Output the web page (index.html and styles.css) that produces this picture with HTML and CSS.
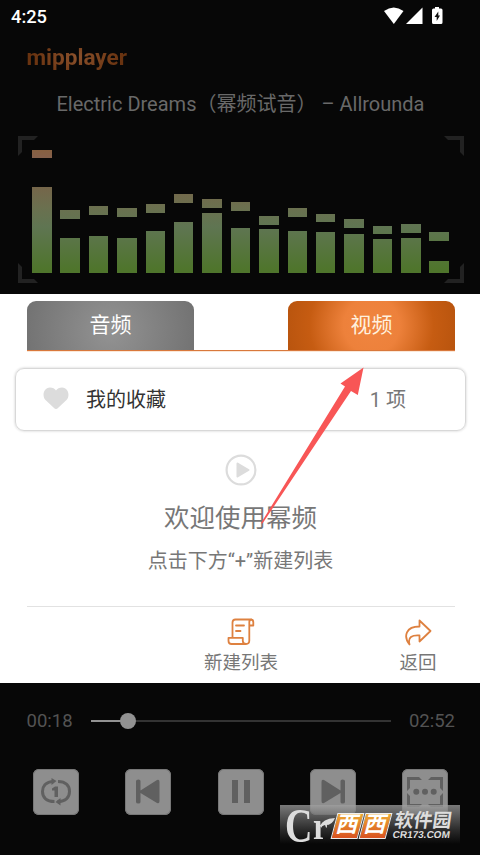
FILE: index.html
```html
<!DOCTYPE html>
<html lang="zh-CN">
<head>
<meta charset="utf-8">
<title>mipplayer</title>
<link rel="stylesheet" href="styles.css">
</head>
<body>
<div class="app">
  <header class="top">
    <div class="status">
      <span>4:25</span>
      <svg class="status-icons" width="60" height="20" viewBox="0 0 60 20">
        <path d="M0 4Q9.8-3.2 19.500 4L9.800 17Z"/>
        <path d="M38.500.500V17H22Z"/>
        <path d="M49.500 1.500H51V0H55V1.500H57Q58.500 1.500 58.500 3V15.500Q58.500 17 57 17H49.500Q48 17 48 15.500V3Q48 1.500 49.500 1.500Z"/>
        <path class="bolt" d="M54.300 4.500L50.500 10H52.700V14L56 8.500H54.300Z"/>
      </svg>
    </div>
    <h1 class="brand">mipplayer</h1>
    <p class="track">Electric Dreams（幂频试音） – Allrounda</p>
    <div class="visual">
      <svg class="corners" width="446" height="147" viewBox="0 0 446 147">
        <path d="M0 0H20L16 4H4V16L0 20ZM446 0H426L430 4H442V16L446 20ZM0 147H20L16 143H4V131L0 127ZM446 147H426L430 143H442V131L446 127Z"/>
      </svg>
      <div class="bars" id="bars"></div>
    </div>
  </header>
  <main class="panel">
    <nav class="tabs">
      <div class="tab audio">音频</div>
      <div class="tab video">视频</div>
    </nav>
    <div class="card">
      <svg width="26" height="23" viewBox="0 0 26 23"><path d="M13 22Q12 22 10.500 20.500L2.500 13C-1 9.500 0 1 7 .500Q11 .500 13 3.500Q15 .500 19 .500C26 1 27 9.500 23.500 13L15.500 20.500Q14 22 13 22Z" fill="#dcdcdc"/></svg>
      <span class="name">我的收藏</span>
      <span class="count">1 项</span>
    </div>
    <div class="welcome">
      <svg width="32" height="32" viewBox="0 0 32 32"><circle cx="16" cy="16" r="14.400" fill="none" stroke="#dcdcdc" stroke-width="2.200"/><path d="M12.500 9.500L23.500 16L12.500 22.500Z" fill="#dcdcdc" stroke="#dcdcdc" stroke-width="2" stroke-linejoin="round"/></svg>
      <h2>欢迎使用幂频</h2>
      <p>点击下方“+”新建列表</p>
    </div>
    <div class="actions">
      <div class="action create">
        <svg width="28" height="28" viewBox="0 0 28 28"><path d="M5.500 19.500V4.500Q5.500 1.500 8.500 1.500H23.500Q26.300 1.500 26.300 4V7.500H22.300V4Q22.300 1.500 24.500 1.500M22.300 7.500V22.500Q22.300 26 19 26H4.500Q1.500 26 1.500 23V19.800H15.800V23Q16 26 19 26M9 7.500H17M9 13H13.500"/></svg>
        <span>新建列表</span>
      </div>
      <div class="action back">
        <svg width="28" height="28" viewBox="0 0 28 28"><path d="M15.500 2.500L26.500 13L15.500 23.500V17.500C8 17 3.500 19 5.500 26.500C-1 18 2 8.500 15.500 8.500Z"/></svg>
        <span>返回</span>
      </div>
    </div>
    <svg class="arrow" width="105" height="158" viewBox="0 0 105 158"><path d="M103.500.500L97.800 28L91 24L2.500 156.500L1 156L85 19.500L80.500 16.500Z"/></svg>
  </main>
  <footer class="player">
    <div class="progress">
      <span>00:18</span>
      <div class="line"><i class="played"></i><i class="knob"></i></div>
      <span>02:52</span>
    </div>
    <div class="controls">
      <div class="btn"><svg viewBox="0 0 46 46"><g fill="none" stroke="#606060" stroke-width="3"><path d="M21 12.500C12 12.500 9.500 18 9.500 22.500C9.500 28 13 32.500 21.500 32.500"/><path d="M25 12.500C33 12.500 36.500 17 36.500 22.500C36.500 28 33 32.500 24.500 32.500"/></g><path d="M18.500 9L23.500 12L18.500 16ZM27.500 29L22.500 33L27.500 36.500ZM22 17.500H25V28H21.500V21.500H19V19.500Z" fill="#606060"/></svg></div>
      <div class="btn"><svg viewBox="0 0 46 46"><path d="M11 12Q11 10.500 13.500 10.500Q15.500 10.500 15.500 12V21.500L32 11Q34.500 10 34.500 13V32Q34.500 35 32 34L15.500 24V33Q15.500 34.500 13.500 34.500Q11 34.500 11 33Z"/></svg></div>
      <div class="btn"><svg viewBox="0 0 46 46"><path d="M14 11H20V34H14ZM26 11H32V34H26Z"/></svg></div>
      <div class="btn"><svg viewBox="0 0 46 46"><path d="M35 12Q35 10.500 32.500 10.500Q30.500 10.500 30.500 12V21.500L14 11Q11.500 10 11.500 13V32Q11.500 35 14 34L30.500 24V33Q30.500 34.500 32.500 34.500Q35 34.500 35 33Z"/></svg></div>
      <div class="btn"><svg viewBox="0 0 46 46"><path d="M5 8H17L20 11H8V19L5 22ZM41 8H29L26 11H38V19L41 22ZM5 38H17L20 35H8V27L5 24ZM41 38H29L26 35H38V27L41 24Z"/><circle cx="14.300" cy="22.700" r="3"/><circle cx="23" cy="22.700" r="3"/><circle cx="31.700" cy="22.700" r="3"/></svg></div>
    </div>
    <div class="mark">
      <span class="c">C</span><span class="r">r</span>
      <svg class="leaf" width="14" height="12" viewBox="0 0 14 12"><path d="M0 12Q-1 3 14 2Q11 10 3 9Q1 10 0 12Z"/></svg>
      <b class="tile">西</b><b class="tile">西</b>
      <div class="site"><b>软件园</b><small>CR173.COM</small></div>
    </div>
  </footer>
</div>
<script src="bars.js"></script>
</body>
</html>
```
FILE: styles.css
```css
* { box-sizing: border-box; }
body { margin: 0; font-family: Roboto, "Noto Sans CJK SC", sans-serif; }
h1, h2, p { margin: 0; font-weight: 400; }
svg { display: block; flex: none; }
.app { width: 480px; height: 855px; display: flex; flex-direction: column; overflow: hidden; background: #070707; }
.top { height: 294px; flex: none; }
.status { height: 33px; padding: 7px 36px 0 11px; display: flex; justify-content: space-between; color: #fff; font-size: 18.300px; line-height: 20px; font-weight: 500; }
.status-icons { fill: #fff; }
.status-icons .bolt { fill: #111; }
.brand { width: max-content; margin-left: 26.500px; height: 48px; padding-top: 1px; line-height: 48px; font-size: 22.600px; font-weight: 700; color: transparent; background: radial-gradient(ellipse at center, #8b512c, #693310 65%); -webkit-background-clip: text; background-clip: text; }
.track { height: 55px; padding: 8px 0 0 1px; text-align: center; color: #696969; font-size: 20px; line-height: 30px; white-space: nowrap; }
.visual { display: grid; width: 446px; height: 147px; margin-left: 18px; }
.corners { grid-area: 1 / 1; fill: #222; }
.bars { grid-area: 1 / 1; display: flex; justify-content: space-between; width: 417px; height: 123.500px; margin: 13px 0 0 14px; }
.bar { width: 19.500px; display: flex; flex-direction: column; background: linear-gradient(#87603f 0, #85604a 8px, #75664a 38px, #6b704f 58px, #5f7552 78px, #4f752c 120px); }
.bar span { flex: none; background: #070707; }
.bar span:first-child { margin-bottom: 8.500px; }
.panel { height: 389px; flex: none; position: relative; background: #fff; display: flex; flex-direction: column; }
.tabs { height: 57px; margin: 0 25px 0 27px; padding-top: 7px; display: flex; justify-content: space-between; border-bottom: 1px solid #d9783c; box-shadow: 0 1px 0 #fbe8d8; }
.tab { width: 167px; height: 49px; border-radius: 9px 9px 0 0; color: #fff; font-size: 21px; line-height: 49px; text-align: center; }
.audio { background: radial-gradient(circle at 50% 60%, #939393, #737373 85px); }
.video { color: #fff1df; background: radial-gradient(circle at 50% 50%, #f08540 0, #ed813b 28px, #c65c12 62px, #b8540e 88px); }
.card { height: 63px; margin: 17px 14px 0 15px; padding: 0 59px 2px 28px; display: flex; align-items: center; border: 1px solid #d8d8d8; border-radius: 9px; box-shadow: 0 0 2px 1px #e8e8e8; font-size: 20px; color: #333; }
.card svg { position: relative; left: -1px; }
.name { margin-left: 16px; }
.count { margin-left: auto; color: #777; }
.welcome { height: 175px; padding: 23px 0 0 1px; display: flex; flex-direction: column; align-items: center; color: #777; }
.welcome h2 { margin-top: 14px; font-size: 25.500px; line-height: 37px; }
.welcome p { margin-top: 10px; font-size: 20px; line-height: 29px; }
.actions { flex: 1; margin: 0 25px 0 27px; border-top: 1px solid #e2e2e2; display: grid; grid-template-columns: 1fr 1fr 1fr; color: #777; font-size: 18.500px; line-height: 26px; }
.action { display: flex; flex-direction: column; align-items: center; padding-top: 10.500px; gap: 4px; }
.create { grid-column: 2; }
.back { width: 74px; margin-left: auto; }
.action svg { fill: none; stroke: #de8140; stroke-width: 1.800; stroke-linejoin: round; stroke-linecap: round; }
.arrow { position: absolute; left: 260px; top: 73px; fill: #f85656; }
.player { flex: 1; position: relative; color: #535353; }
.progress { height: 75px; padding: 0 25px 0 26.500px; display: flex; align-items: center; justify-content: space-between; font-size: 18.500px; }
.line { position: relative; width: 300px; height: 2px; background: #333; }
.played { display: block; width: 37px; height: 2px; background: #929292; }
.knob { position: absolute; left: 29px; top: -7px; width: 16px; height: 16px; border-radius: 50%; background: #929292; }
.controls { display: flex; justify-content: space-between; margin: 11px 32px 0 33px; }
.btn { width: 46px; height: 46px; border-radius: 6px; background: #8e8e8e; box-shadow: inset 0 0 0 1px #777; fill: #606060; }
.mark { position: absolute; left: 280px; top: 122px; width: 180px; height: 39px; display: flex; align-items: center; color: #ddd; background: linear-gradient(rgba(160,160,160,.75), rgba(50,50,50,.8) 65%, #070707); }
.c { width: 28px; margin-left: 5px; font: 700 38px/38px "Liberation Serif", serif; transform: scaleY(1.28); }
.r { margin-top: 2px; width: 15px; font: 700 33px/30px "Liberation Serif", serif; transform: scaleY(1.15); }
.leaf { fill: #ddd; margin: -5px -1px 0 -7px; }
.tile { flex: none; width: 27px; height: 26px; margin: 2px 1px 0 0; background: linear-gradient(#edaa33, #d95220); border: 1px solid #eee; transform: skewX(-15deg); color: #fff; font-size: 22px; line-height: 22px; text-align: center; }
.site { flex: none; width: 60px; margin: 1px 0 0 4px; transform: skewX(-8deg); white-space: nowrap; }
.site b { display: block; font-size: 19px; line-height: 19px; }
.site small { display: block; font: 700 10px/10px "Liberation Sans", sans-serif; }
```
FILE: bars.js
```js
// [peak top, bar top], measured from the top of the visualizer
const levels = [
  [0.5, 38], [61, 89], [57, 87], [59, 89], [55, 82], [45, 73], [50, 63.5], [53, 79],
  [67, 80], [59, 82], [64.5, 83], [70, 84.5], [76.5, 90], [75, 89], [83, 112]
];
const bars = document.getElementById('bars');
for (const [peak, top] of levels) {
  const bar = document.createElement('div');
  bar.className = 'bar';
  for (const height of [peak, top - peak - 8.5]) {
    const gap = document.createElement('span');
    gap.style.height = height + 'px';
    bar.append(gap);
  }
  bars.append(bar);
}
```
